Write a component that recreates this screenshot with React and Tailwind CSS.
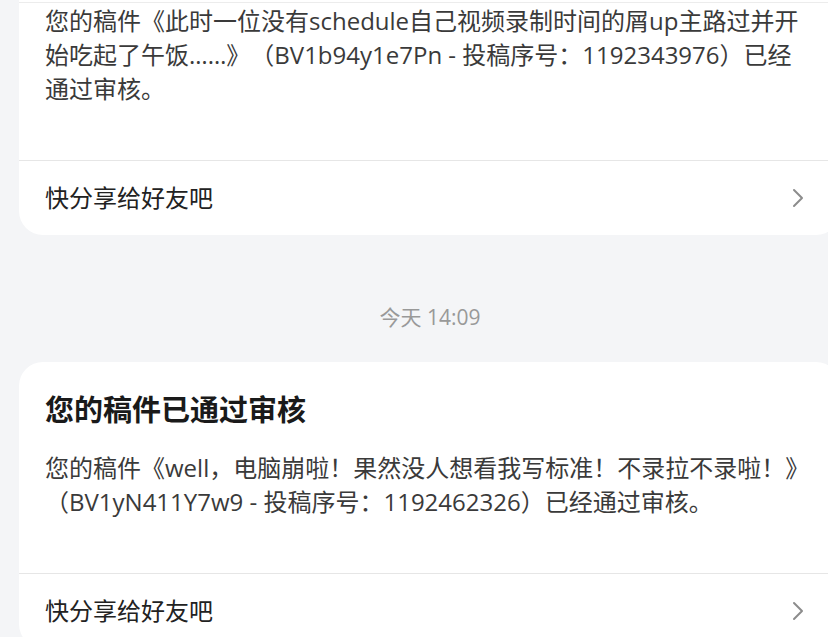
import React from 'react';

const fontStack = '"Open Sans", "Noto Sans CJK SC", sans-serif';

const ChevronRight = () => (
  <svg width="12" height="20" viewBox="0 0 12 20" fill="none">
    <polyline points="2,2 10,10 2,18" stroke="#8c8c8c" strokeWidth="2" strokeLinecap="round" strokeLinejoin="round" />
  </svg>
);

const ShareRow = () => (
  <div className="h-[75px] border-t border-[#e6e6e6] flex items-center justify-between pl-[26px] pr-[36px]">
    <span className="text-[24px] leading-[34px] text-[#222]">快分享给好友吧</span>
    <ChevronRight />
  </div>
);

const Card = ({ title, lines, first }) => (
  <div
    className={
      'bg-white w-[821px] ' + (first ? 'rounded-b-3xl' : 'rounded-3xl')
    }
  >
    {first && <div className="h-[3px] border-b border-[#ececec]" />}
    <div className={first ? 'pl-[26px] pr-[30px] pt-[1px] pb-[54px]' : 'pl-[26px] pr-[30px] pt-[28px] pb-[54px]'}>
      {title && (
        <h3 className="text-[29px] leading-[40px] font-bold text-[#1a1a1a] mb-[21px]">{title}</h3>
      )}
      <div className="text-[24px] leading-[34px] text-[#3a3a3a]">
        {lines.map((line) => (
          <div key={line} className="whitespace-nowrap">
            {line}
          </div>
        ))}
      </div>
    </div>
    <ShareRow />
  </div>
);

export default function App() {
  return (
    <div
      className="w-[828px] h-[637px] overflow-hidden bg-[#f4f5f7] pl-[19px] [text-spacing-trim:space-all]"
      style={{ fontFamily: fontStack }}
    >
      <Card
        first
        lines={[
          '您的稿件《此时一位没有schedule自己视频录制时间的屑up主路过并开',
          '始吃起了午饭……》（BV1b94y1e7Pn - 投稿序号：1192343976）已经',
          '通过审核。',
        ]}
      />

      <div className="mt-[68px] mb-[31px] pl-[13px] text-center text-[21px] leading-[28px] text-[#999]">
        今天 14:09
      </div>

      <Card
        title="您的稿件已通过审核"
        lines={[
          '您的稿件《well，电脑崩啦！果然没人想看我写标准！不录拉不录啦！》',
          '（BV1yN411Y7w9 - 投稿序号：1192462326）已经通过审核。',
        ]}
      />
    </div>
  );
}
